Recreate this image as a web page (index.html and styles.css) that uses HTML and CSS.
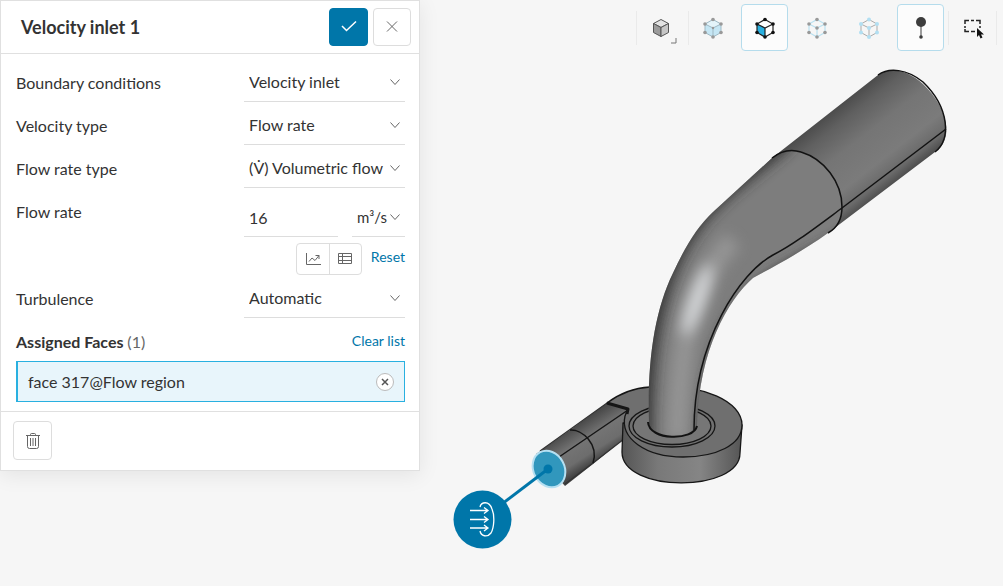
FILE: index.html
```html
<!DOCTYPE html>
<html lang="en">
<head>
<meta charset="utf-8">
<meta name="viewport" content="width=device-width, initial-scale=1">
<title>Velocity inlet 1</title>
<link rel="stylesheet" href="styles.css">
</head>
<body>
<svg class="defs" width="0" height="0" aria-hidden="true">
  <symbol id="chevron" viewBox="0 0 12 12"><path d="M1.500 3.500 6 8.500l4.500-5" fill="none" stroke="currentColor" stroke-width="1"/></symbol>
</svg>
<main class="app">
  <form class="panel">
    <header class="panel-header">
      <h1 class="title">Velocity inlet 1</h1>
      <button class="btn btn-primary" type="button" aria-label="Apply">
        <svg width="18" height="14" viewBox="0 0 18 14"><path d="M2 6 6.500 10.500 16 1.500" fill="none" stroke="#fff" stroke-width="1.500"/></svg>
      </button>
      <button class="btn" type="button" aria-label="Close">
        <svg width="12" height="12" viewBox="0 0 12 12"><path d="M1 0.500l10 10M11 0.500l-10 10" fill="none" stroke="currentColor"/></svg>
      </button>
    </header>

    <div class="fields">
      <div class="row">
        <label for="bc">Boundary conditions</label>
        <div class="select"><select id="bc"><option>Velocity inlet</option></select><svg class="chev"><use href="#chevron"/></svg></div>
      </div>
      <div class="row">
        <label for="vt">Velocity type</label>
        <div class="select"><select id="vt"><option>Flow rate</option></select><svg class="chev"><use href="#chevron"/></svg></div>
      </div>
      <div class="row">
        <label for="frt">Flow rate type</label>
        <div class="select"><select id="frt"><option>(V̇) Volumetric flow</option></select><svg class="chev"><use href="#chevron"/></svg></div>
      </div>
      <div class="row">
        <label for="fr">Flow rate</label>
        <div class="value">
          <input id="fr" type="text" value="16">
          <div class="select unit"><select aria-label="Unit"><option>m³/s</option></select><svg class="chev"><use href="#chevron"/></svg></div>
        </div>
      </div>
      <div class="tools">
        <div class="group">
          <button type="button" aria-label="Plot">
            <svg width="16" height="14" viewBox="0 0 16 14" fill="none" stroke="currentColor"><path d="M1.500 1v11.500H16M4 9.500 7 6l3 2.500 4-5M10.500 3.500H14V7"/></svg>
          </button>
          <button type="button" aria-label="Table">
            <svg width="16" height="14" viewBox="0 0 16 14" fill="none" stroke="currentColor"><path d="M1.500 1.500h13v10h-13zM5.500 1.500v10M1.500 4.500h13M1.500 8.500h13"/></svg>
          </button>
        </div>
        <a class="link" href="#reset">Reset</a>
      </div>
      <div class="row">
        <label for="tb">Turbulence</label>
        <div class="select"><select id="tb"><option>Automatic</option></select><svg class="chev"><use href="#chevron"/></svg></div>
      </div>
    </div>

    <section class="faces">
      <div class="faces-head">
        <h2>Assigned Faces <span>(1)</span></h2>
        <a class="link" href="#clear">Clear list</a>
      </div>
      <div class="face">
        <span>face 317@Flow region</span>
        <button class="remove" type="button" aria-label="Remove face">
          <svg width="8" height="8" viewBox="0 0 8 8"><path d="M1 1l6 6M7 1 1 7" stroke="currentColor" stroke-width="1.500"/></svg>
        </button>
      </div>
    </section>

    <footer class="panel-footer">
      <button class="btn" type="button" aria-label="Delete">
        <svg width="16" height="18" viewBox="0 0 16 18" fill="none" stroke="currentColor"><path d="M1 3.500h14M5.500 3.500v-1q0-1 1-1h3q1 0 1 1v1M2.500 3.500v11q0 2 2 2h7q2 0 2-2v-11M5.500 6v8M8 6v8M10.500 6v8"/></svg>
      </button>
    </footer>
  </form>

  <section class="viewport">
    <nav class="toolbar" aria-label="View tools">
      <button class="tool sep" type="button" aria-label="Solid view">
        <svg width="24" height="24" viewBox="0 0 24 24" stroke="#555" stroke-linejoin="round"><path d="M12 3.500 19.500 7.500 12 11.500 4.500 7.500z" fill="#e3e3e3"/><path d="M4.500 7.500 12 11.500v9l-7.500-4z" fill="#9b9b9b"/><path d="M19.500 7.500 12 11.500v9l7.500-4z" fill="#c6c6c6"/></svg>
        <svg class="corner" width="6" height="6" viewBox="0 0 6 6"><path d="M5 0v5H0" fill="none" stroke="#777"/></svg>
      </button>
      <button class="tool sep" type="button" aria-label="Select volumes">
        <svg width="24" height="24" viewBox="0 0 24 24"><path d="M12 3.500 20 8v8.500l-8 4.500-8-4.500V8z" fill="#c5e6f4"/><path d="M12 3.500 20 8l-8 4-8-4z" fill="#e4f4fa"/><path d="M12 3.500 20 8v8.500l-8 4.500-8-4.500V8zM4 8l8 4 8-4M12 12v9" fill="none" stroke="#9fb9c4"/><g fill="#999"><circle cx="12" cy="3.500" r="1.800"/><circle cx="20" cy="8" r="1.800"/><circle cx="20" cy="16.500" r="1.800"/><circle cx="12" cy="21" r="1.800"/><circle cx="4" cy="16.500" r="1.800"/><circle cx="4" cy="8" r="1.800"/><circle cx="12" cy="12" r="1.200"/></g></svg>
      </button>
      <button class="tool active" type="button" aria-label="Select faces" aria-pressed="true">
        <svg width="24" height="24" viewBox="0 0 24 24"><path d="M12 3.500 20 8v8.500l-8 4.500-8-4.500V8z" fill="#fff"/><path d="M4 8l8 4v9l-8-4.500z" fill="#29b0e0"/><path d="M12 3.500 20 8v8.500l-8 4.500-8-4.500V8zM4 8l8 4 8-4M12 12v9" fill="none" stroke="#222" stroke-width="1.200"/><g fill="#111"><circle cx="12" cy="3.500" r="1.800"/><circle cx="20" cy="8" r="1.800"/><circle cx="20" cy="16.500" r="1.800"/><circle cx="12" cy="21" r="1.800"/><circle cx="4" cy="16.500" r="1.800"/><circle cx="4" cy="8" r="1.800"/></g></svg>
      </button>
      <button class="tool" type="button" aria-label="Select edges">
        <svg width="24" height="24" viewBox="0 0 24 24"><path d="M12 3.500 20 8v8.500l-8 4.500-8-4.500V8zM4 8l8 4 8-4M12 12v9" fill="none" stroke="#b9e1f1" stroke-width="1.200"/><g fill="#999"><circle cx="12" cy="3.500" r="1.800"/><circle cx="20" cy="8" r="1.800"/><circle cx="20" cy="16.500" r="1.800"/><circle cx="12" cy="21" r="1.800"/><circle cx="4" cy="16.500" r="1.800"/><circle cx="4" cy="8" r="1.800"/><circle cx="12" cy="12" r="1.800"/></g></svg>
      </button>
      <button class="tool" type="button" aria-label="Select vertices">
        <svg width="24" height="24" viewBox="0 0 24 24"><path d="M12 3.500 20 8v8.500l-8 4.500-8-4.500V8zM4 8l8 4 8-4M12 12v9" fill="none" stroke="#aaa"/><g fill="#b2dff2"><circle cx="12" cy="3.500" r="2"/><circle cx="20" cy="8" r="2"/><circle cx="20" cy="16.500" r="2"/><circle cx="12" cy="21" r="2"/><circle cx="4" cy="16.500" r="2"/><circle cx="4" cy="8" r="2"/><circle cx="12" cy="12" r="2"/></g></svg>
      </button>
      <button class="tool active" type="button" aria-label="Probe" aria-pressed="true">
        <svg width="24" height="24" viewBox="0 0 24 24" fill="#3d3d3d"><circle cx="12" cy="6" r="5"/><path d="M11.500 10h1v11h-1z"/><circle cx="12" cy="21" r="1.800"/></svg>
      </button>
      <button class="tool sep sep-end" type="button" aria-label="Box select">
        <svg width="24" height="24" viewBox="0 0 24 24"><path d="M4 8V4.500h4M10 4.500h3M15 4.500h4V8M4 10v2M4 13v2.500h4M10 15.500h4M19 10v2" fill="none" stroke="#222" stroke-width="1.500"/><path d="M16 12v9l2-2 1.500 3.500 2-1L20 18.500h3z" fill="#111"/></svg>
      </button>
    </nav>

    <svg class="scene" viewBox="420 60 583 526" role="img" aria-label="Pipe geometry with a velocity inlet">
      <defs>
        <linearGradient id="pipe" gradientUnits="userSpaceOnUse" x1="825" y1="116" x2="886" y2="194">
          <stop offset="0" stop-color="#4c4c4c"/><stop offset=".15" stop-color="#606060"/><stop offset=".4" stop-color="#757575"/><stop offset=".7" stop-color="#7b7b7b"/><stop offset=".87" stop-color="#6a6a6a"/><stop offset="1" stop-color="#444"/>
        </linearGradient>
        <linearGradient id="wall" gradientUnits="userSpaceOnUse" x1="622" y1="0" x2="742" y2="0">
          <stop offset="0" stop-color="#555"/><stop offset=".3" stop-color="#797979"/><stop offset=".65" stop-color="#858585"/><stop offset="1" stop-color="#555"/>
        </linearGradient>
        <linearGradient id="inlet" gradientUnits="userSpaceOnUse" x1="572" y1="428" x2="594" y2="463">
          <stop offset="0" stop-color="#4a4a4a"/><stop offset=".4" stop-color="#747474"/><stop offset=".75" stop-color="#6d6d6d"/><stop offset="1" stop-color="#444"/>
        </linearGradient>
        <filter id="soft" filterUnits="userSpaceOnUse" x="600" y="60" width="403" height="420"><feGaussianBlur stdDeviation="7"/></filter>
        <filter id="edge" filterUnits="userSpaceOnUse" x="600" y="60" width="403" height="420"><feGaussianBlur stdDeviation="4"/></filter>
        <clipPath id="bend"><path d="M772 158C782 150 792 150 801 152C824 159 842 182 842 207C842 220 837 228 828 233C800 253 775 266 753 278C728 300 699 350 697 425C695 441 650 441 649 423C647 360 655 310 673 273C685 247 697 227 713 212Z"/></clipPath>
      </defs>

      <g stroke="#161616" stroke-width="1.300" stroke-linejoin="round">
        <path d="M607 403 570 430 536 454 565 486 593 464 626 437 629 409Z" fill="url(#inlet)" stroke="none"/>
        <path d="M607 403 540 451M565 484 593 463 624 439" fill="none" stroke="#333"/>
        <path d="M570 430C582 429 599 444 593 463M628 410 559 457" fill="none" stroke-width="1.500"/>
        <path d="M623 423 622 452C622 493 740 493 740 453L742 425Z" fill="url(#wall)"/>
        <path d="M607 403C620 393 634 388 650 387C704 383 742 402 742 425C742 445 716 457 683 457C645 457 620 438 625 416L628 409Z" fill="#6f6f6f"/>
        <path d="M607 403 628 409 627 414" fill="none" stroke-width="3"/>
        <ellipse cx="672" cy="426" rx="43" ry="21" fill="#707070"/>
        <ellipse cx="672" cy="426" rx="39" ry="18.500" fill="#767676"/>
      </g>

      <path d="M878 75 772 158 828 233 935 152C954 140 949 109 923 84C907 69 889 67 878 75Z" fill="url(#pipe)"/>
      <g clip-path="url(#bend)">
        <path d="M640 140h215v310H640z" fill="#7d7d7d"/>
        <path d="M786 136C741 172 715 192 698 212C650 270 639 352 640 445" fill="none" stroke="#303030" stroke-width="24" filter="url(#soft)"/>
        <path d="M850 234C805 260 780 272 758 288C724 324 704 372 703 445" fill="none" stroke="#3c3c3c" stroke-width="15" filter="url(#edge)"/>
        <path d="M733 240C691 284 680 340 677 440" fill="none" stroke="#949494" stroke-width="20" filter="url(#soft)"/>
        <ellipse cx="697" cy="300" rx="8" ry="38" transform="rotate(20 697 300)" fill="#d6d8da" filter="url(#soft)"/>
      </g>
      <g fill="none" stroke="#121212" stroke-width="1.500">
        <path d="M878 75C889 67 907 69 923 82C950 108 951 140 935 152M772 158C782 150 792 149 801 152C824 159 842 182 842 207C842 220 837 228 828 233"/>
        <path d="M946 129 842 208C815 228 793 245 773 255C741 272 694 340 694 430"/>
        <path d="M648 422C649 441 694 441 697 426" stroke-width="2"/>
      </g>

      <ellipse cx="549" cy="469" rx="15.500" ry="19" transform="rotate(-28 549 469)" fill="#3197bd" stroke="#b6e0f2" stroke-width="2"/>
      <path d="M548 469 482 519" stroke="#0076a9" stroke-width="3"/>
      <circle cx="548" cy="469" r="4.500" fill="#0076a9"/>
      <circle cx="482.500" cy="519.500" r="29" fill="#0076a9"/>
      <g fill="none" stroke="#fff" stroke-width="1.300">
        <path d="M480 507C481 502 489 500 492 509C495 516 494 528 491 533C487 538 481 536 480 531"/>
        <path d="M470 510.500h17M470 519.500h17M470 528h17M484 507.500l4 3-4 3M484 516.500l4 3-4 3M484 525l4 3-4 3"/>
      </g>
    </svg>
  </section>
</main>
</body>
</html>
```
FILE: styles.css
```css
* { box-sizing: border-box; }

body {
  margin: 0;
  background: #f6f6f6;
  color: #333;
  font: 16px/20px Lato, "Noto Sans", sans-serif;
}

.defs { display: block; height: 0; }

.app {
  display: grid;
  grid-template-columns: minmax(0, 420px) minmax(0, 1fr);
  align-items: start;
}

button, select, input { font: inherit; color: inherit; }
button { padding: 0; cursor: pointer; }
svg { display: block; }

.panel {
  background: #fff;
  border: 1px solid #e0e0e0;
  box-shadow: 0 4px 20px rgba(0, 0, 0, 0.08);
}

.panel-header {
  display: flex;
  align-items: center;
  gap: 5px;
  padding: 7px 8px 7px 20px;
  border-bottom: 1px solid #e0e0e0;
}

.title {
  flex: 1;
  margin: 0;
  font-size: 18px;
  font-weight: 700;
}

.btn {
  display: grid;
  place-items: center;
  width: 38px;
  height: 38px;
  border: 1px solid #ddd;
  border-radius: 4px;
  background: #fff;
  color: #666;
}

.btn-primary {
  width: 39px;
  border-color: #0076a9;
  background: #0076a9;
}

.fields {
  display: grid;
  gap: 6px;
  padding: 11px 14px 0 15px;
}

.row {
  display: grid;
  grid-template-columns: minmax(0, 1fr) 161px;
  align-items: start;
}

.row label { line-height: 36px; }

.select { position: relative; }

.select select,
.value input {
  display: block;
  width: 100%;
  height: 37px;
  padding: 0 0 2px 5px;
  border: 0;
  border-bottom: 1px solid #ddd;
  border-radius: 0;
  background: transparent;
  appearance: none;
}

.unit select { font-size: 15px; }

.chev {
  position: absolute;
  top: 11px;
  right: 4px;
  width: 12px;
  height: 12px;
  color: #666;
  pointer-events: none;
}

.value {
  display: grid;
  grid-template-columns: minmax(0, 1fr) 53px;
  gap: 14px;
  padding-top: 6px;
}

.tools {
  display: flex;
  justify-content: flex-end;
  gap: 9px;
}

.group {
  display: flex;
  border: 1px solid #ddd;
  border-radius: 4px;
}

.group button {
  display: grid;
  place-items: center;
  width: 32px;
  height: 30px;
  border: 0;
  background: none;
  color: #666;
}

.group button + button { border-left: 1px solid #ddd; }

.link {
  color: #0076a9;
  font-size: 14px;
  line-height: 28px;
  text-decoration: none;
}

.faces { padding: 8px 14px 9px 15px; }

.faces-head {
  display: flex;
  justify-content: space-between;
}

.faces-head h2 {
  margin: 0;
  font-size: 16px;
  font-weight: 700;
  line-height: 32px;
}

.faces-head .link { line-height: 30px; }

.faces-head span {
  color: #666;
  font-weight: 400;
}

.face {
  display: flex;
  align-items: center;
  justify-content: space-between;
  margin-top: 3px;
  padding: 0 10px;
  border: 1px solid #29b0e0;
  border-left-width: 2px;
  background: #e8f5fb;
  line-height: 39px;
}

.remove {
  display: grid;
  place-items: center;
  width: 18px;
  height: 18px;
  border: 1px solid #bbb;
  border-radius: 50%;
  background: #fff;
  color: #555;
}

.panel-footer {
  padding: 9px 12px 10px;
  border-top: 1px solid #e0e0e0;
}

.panel-footer .btn { width: 39px; height: 39px; }

.toolbar {
  display: flex;
  justify-content: flex-end;
  gap: 5px;
  padding: 4px 7px 9px 0;
}

.tool {
  position: relative;
  display: grid;
  place-items: center;
  width: 47px;
  height: 47px;
  border: 1px solid transparent;
  border-radius: 4px;
  background: none;
}

.tool.active {
  border-color: #b5dcec;
  background: #fcfcfc;
}

.sep::before,
.sep-end::after {
  content: "";
  position: absolute;
  top: 6px;
  left: -2px;
  width: 1px;
  height: 34px;
  background: #eaeaea;
}

.sep-end::after { left: auto; right: -2px; }

.corner {
  position: absolute;
  right: 6px;
  bottom: 6px;
}

.scene {
  width: 100%;
  height: auto;
}
```
